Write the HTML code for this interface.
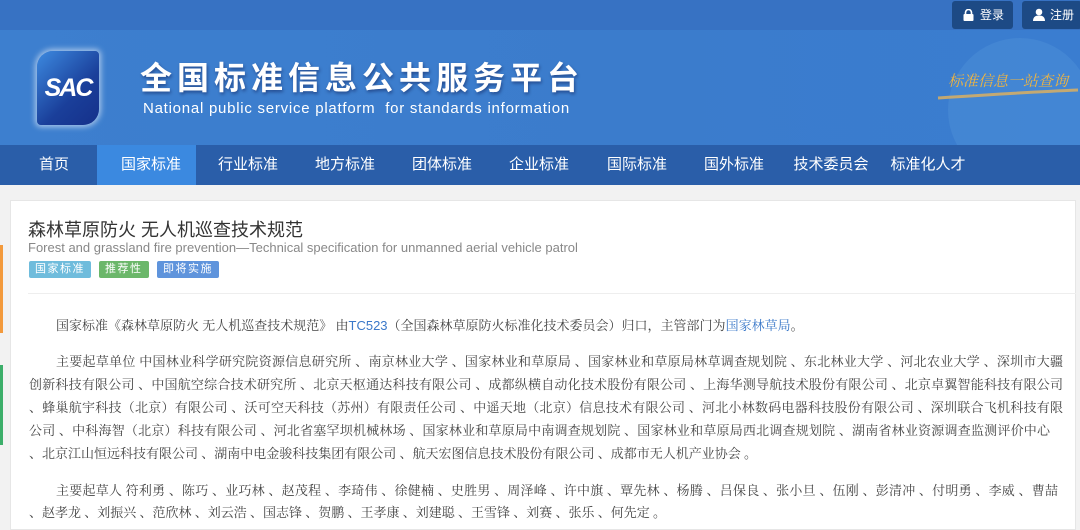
<!DOCTYPE html>
<html><head><meta charset="utf-8"><style>
*{margin:0;padding:0;box-sizing:border-box}
body{width:1080px;height:524px;overflow:hidden;background:#f2f2f2;font-family:"Liberation Sans","Noto Sans CJK SC",sans-serif;position:relative}
.top{position:absolute;left:0;top:0;width:1080px;height:30px;background:#3772c3}
.btn{position:absolute;top:1px;height:28px;background:#1d4a85;border-radius:3px;color:#fff;font-size:12px;line-height:28px}
.hdr{position:absolute;left:0;top:30px;width:1080px;height:115px;background:linear-gradient(90deg,#3d7fcf,#3b7ccc 60%,#3a7dd0);}
.logo{position:absolute;left:37px;top:51px;width:62px;height:74px;border-radius:16px 4px 16px 4px;background:linear-gradient(135deg,#3d8ae0,#1a3f9a 60%,#15308a);box-shadow:0 0 6px 2px rgba(255,255,255,.55);color:#fff;font:italic bold 25px "Liberation Sans",sans-serif;text-align:center;line-height:74px;letter-spacing:-2px}
.cn{position:absolute;left:140px;top:53px;color:#fff;font-size:32px;letter-spacing:5px;text-shadow:1px 2px 3px rgba(0,0,50,.4);font-weight:bold}
.en{position:absolute;left:143px;top:100px;color:#fff;font-size:15px;letter-spacing:.75px;white-space:pre}
.nav{position:absolute;left:0;top:145px;width:1080px;height:40px;background:#2a5ea9}
.nav span{position:absolute;top:0;height:40px;line-height:39px;color:#fff;font-size:15px;transform:translateX(-50%)}
.act{position:absolute;left:97px;top:145px;width:99px;height:40px;background:#3b89e0}
.card{position:absolute;left:10px;top:200px;width:1066px;height:330px;background:#fff;border:1px solid #e6e6e6}
.t1{position:absolute;left:28px;top:216px;font-size:18px;color:#333}
.t2{position:absolute;left:28px;top:240px;font-size:13px;color:#888}
.tag{position:absolute;top:261px;height:17px;line-height:17px;font-size:11px;color:#fff;border-radius:2px;padding:0 6px;letter-spacing:1.5px}
.hr{position:absolute;left:28px;top:293px;width:1048px;height:1px;background:#eee}
.bd{position:absolute;left:29px;width:1034px;font-family:"Liberation Serif","Noto Serif CJK SC",serif;font-size:13px;color:#444;white-space:nowrap}
.j{text-align:justify;text-align-last:justify}
a{color:#3a78c9;text-decoration:none;font-family:"Liberation Sans",sans-serif}
</style></head><body>
<div class="top"></div>
<div class="btn" style="left:952px;width:61px"><svg style="position:absolute;left:11px;top:8px" width="11" height="12" viewBox="0 0 11 12"><path d="M2.5 5V3.5a3 3 0 0 1 6 0V5" stroke="#fff" stroke-width="1.6" fill="none"/><rect x="0.5" y="5" width="10" height="7" rx="1" fill="#fff"/></svg><span style="position:absolute;left:28px">登录</span></div>
<div class="btn" style="left:1022px;width:60px"><svg style="position:absolute;left:11px;top:7px" width="12" height="13" viewBox="0 0 12 13"><circle cx="6" cy="4" r="3.3" fill="#fff"/><path d="M0 13c0-4 2.5-5.5 6-5.5s6 1.5 6 5.5z" fill="#fff"/></svg><span style="position:absolute;left:28px">注册</span></div>
<div class="hdr"></div>
<svg style="position:absolute;left:700px;top:30px" width="380" height="115"><circle cx="320" cy="80" r="72" fill="#6aa8e8" opacity=".2"/><path d="M238 68 Q330 62 378 60" stroke="#e3b15a" stroke-width="3" opacity=".8" fill="none"/><text x="248" y="56" font-family="Liberation Serif,Noto Serif CJK SC,serif" font-style="italic" font-size="15" fill="#f0b540">标准信息一站查询</text></svg>
<div class="logo">SAC</div>
<div class="cn">全国标准信息公共服务平台</div>
<div class="en">National public service platform  for standards information</div>
<div class="nav"></div><div class="act"></div>
<div class="nav" style="background:none">
<span style="left:54px">首页</span><span style="left:151px">国家标准</span><span style="left:248px">行业标准</span><span style="left:345px">地方标准</span><span style="left:442px">团体标准</span><span style="left:539px">企业标准</span><span style="left:637px">国际标准</span><span style="left:734px">国外标准</span><span style="left:831px">技术委员会</span><span style="left:928px">标准化人才</span></div>
<div class="card"></div>
<div style="position:absolute;left:0;top:245px;width:3px;height:88px;background:#f39a3c"></div>
<div style="position:absolute;left:0;top:365px;width:3px;height:80px;background:#3cae6a"></div>
<div class="t1">森林草原防火 无人机巡查技术规范</div>
<div class="t2">Forest and grassland fire prevention—Technical specification for unmanned aerial vehicle patrol</div>
<div class="tag" style="left:29px;background:#6fbcdc">国家标准</div>
<div class="tag" style="left:99px;background:#6bb76a">推荐性</div>
<div class="tag" style="left:157px;background:#5f94dc">即将实施</div>
<div class="hr"></div>
<div class="bd" style="top:315px;left:56px">国家标准《森林草原防火 无人机巡查技术规范》 由<a>TC523</a>（全国森林草原防火标准化技术委员会）归口，主管部门为<a style="font-family:inherit">国家林草局</a>。</div>
<div class="bd j" style="top:351px;left:56px;width:1007px">主要起草单位 中国林业科学研究院资源信息研究所 、南京林业大学 、国家林业和草原局 、国家林业和草原局林草调查规划院 、东北林业大学 、河北农业大学 、深圳市大疆</div>
<div class="bd j" style="top:374px">创新科技有限公司 、中国航空综合技术研究所 、北京天枢通达科技有限公司 、成都纵横自动化技术股份有限公司 、上海华测导航技术股份有限公司 、北京卓翼智能科技有限公司</div>
<div class="bd j" style="top:397px">、蜂巢航宇科技（北京）有限公司 、沃可空天科技（苏州）有限责任公司 、中遥天地（北京）信息技术有限公司 、河北小林数码电器科技股份有限公司 、深圳联合飞机科技有限</div>
<div class="bd j" style="top:420px;width:1021px">公司 、中科海智（北京）科技有限公司 、河北省塞罕坝机械林场 、国家林业和草原局中南调查规划院 、国家林业和草原局西北调查规划院 、湖南省林业资源调查监测评价中心</div>
<div class="bd" style="top:443px">、北京江山恒远科技有限公司 、湖南中电金骏科技集团有限公司 、航天宏图信息技术股份有限公司 、成都市无人机产业协会 。</div>
<div class="bd j" style="top:480px;left:56px;width:1002px">主要起草人 符利勇 、陈巧 、业巧林 、赵茂程 、李琦伟 、徐健楠 、史胜男 、周泽峰 、许中旗 、覃先林 、杨腾 、吕保良 、张小旦 、伍刚 、彭清冲 、付明勇 、李威 、曹喆</div>
<div class="bd" style="top:502px">、赵孝龙 、刘振兴 、范欣林 、刘云浩 、国志锋 、贺鹏 、王孝康 、刘建聪 、王雪锋 、刘赛 、张乐 、何先定 。</div>
</body></html>
